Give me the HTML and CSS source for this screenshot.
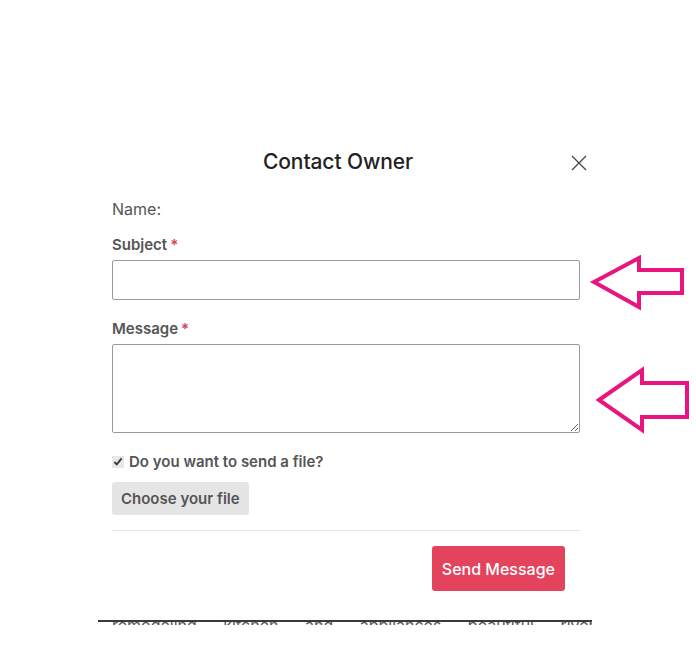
FILE: index.html
```html
<!DOCTYPE html>
<html lang="en">
<head>
    <meta charset="UTF-8">
    <meta name="viewport" content="width=device-width, initial-scale=1.0">
    <title>Contact Owner</title>
    <link rel="stylesheet" href="styles.css">
</head>
<body>
    <div class="modal">
        <div class="modal-header">
            <h2 class="modal-title">Contact Owner</h2>
            <button class="close-btn" aria-label="Close">
                <svg width="16" height="16" viewBox="0 0 16 16"><path d="M1 1L15 15M15 1L1 15" stroke="#444" stroke-width="1.3" fill="none"/></svg>
            </button>
        </div>
        <form class="modal-body">
            <div class="owner-name">Name:</div>
            <label class="field-label" for="subject">Subject<span class="req">*</span></label>
            <input type="text" id="subject" class="field-input">
            <label class="field-label message-label" for="message">Message<span class="req">*</span></label>
            <textarea id="message" class="field-textarea"></textarea>
            <label class="check-row"><input type="checkbox" checked> Do you want to send a file?</label>
            <button type="button" class="file-btn">Choose your file</button>
            <div class="modal-footer">
                <button type="button" class="send-btn">Send Message</button>
            </div>
        </form>
        <div class="page-edge"><span>remodeling kitchen and appliances beautiful river and</span></div>
    </div>

    <!-- annotation arrows -->
    <svg class="arrow arrow-one" width="100" height="60" viewBox="0 0 100 60">
        <polygon points="4,27 49,3 49,15 92,15 92,38 49,38 49,52" fill="none" stroke="#e8157f" stroke-width="4" stroke-linejoin="miter"/>
    </svg>
    <svg class="arrow arrow-two" width="100" height="70" viewBox="0 0 100 70">
        <polygon points="4,35 47,5 47,18 92,18 92,52 47,52 47,65" fill="none" stroke="#e8157f" stroke-width="4" stroke-linejoin="miter"/>
    </svg>
</body>
</html>
```

FILE: styles.css
```css
body {
    margin: 0;
    background-color: #fff;
    font-family: Inter, "Noto Sans", sans-serif;
    color: #555;
}
.modal {
    width: 494px;
    margin: 130px 0 0 98px;
    background-color: #fff;
}
.modal-header {
    display: flex;
    justify-content: center;
    align-items: center;
    padding: 20px 14px 0 0;
    position: relative;
}
.modal-title {
    margin: 0;
    font-size: 21px;
    line-height: 24px;
    font-weight: 500;
    color: #222;
    letter-spacing: -0.1px;
}
.close-btn {
    position: absolute;
    right: 5px;
    top: 25px;
    padding: 0;
    border: none;
    background: transparent;
    cursor: pointer;
    display: flex;
}
.modal-body {
    padding: 0 12px 0 14px;
    display: flex;
    flex-direction: column;
    align-items: flex-start;
}
.owner-name {
    margin-top: 25px;
    font-size: 16px;
    line-height: 20px;
    color: #555;
}
.field-label {
    margin-top: 16px;
    font-size: 15px;
    line-height: 20px;
    font-weight: 600;
    color: #555;
}
.message-label {
    margin-top: 19px;
}
.req {
    color: #d0445e;
    margin-left: 3px;
}
.field-input {
    box-sizing: border-box;
    width: 100%;
    height: 40px;
    margin-top: 5px;
    border: 1px solid #9a9a9a;
    border-radius: 2px;
}
.field-textarea {
    box-sizing: border-box;
    width: 100%;
    height: 89px;
    margin-top: 5px;
    border: 1px solid #9a9a9a;
    border-radius: 2px;
}
.check-row {
    margin-top: 19px;
    display: flex;
    align-items: center;
    gap: 5px;
    font-size: 15px;
    line-height: 20px;
    font-weight: 600;
    color: #555;
}
.check-row input {
    margin: 0;
    width: 12px;
    height: 12px;
    accent-color: #e8e8e8;
}
.file-btn {
    margin-top: 10px;
    height: 33px;
    padding: 0 9px;
    border: none;
    border-radius: 3px;
    background-color: #e5e5e5;
    font-family: inherit;
    font-size: 15px;
    font-weight: 600;
    color: #555;
}
.modal-footer {
    align-self: stretch;
    margin-top: 15px;
    border-top: 1px solid #e5e5e5;
    display: flex;
    justify-content: flex-end;
    padding: 15px 15px 0 0;
}
.send-btn {
    height: 45px;
    padding: 0 10px;
    border: none;
    border-radius: 3px;
    background-color: #e4435e;
    color: #fff;
    font-family: inherit;
    font-size: 16px;
    font-weight: 500;
}
.page-edge {
    margin-top: 29px;
    height: 3px;
    overflow: hidden;
    border-top: 2px solid #3a3a3a;
}
.page-edge span {
    display: block;
    margin-top: -7px;
    padding-left: 14px;
    font-size: 16px;
    word-spacing: 22px;
    color: #555;
    white-space: nowrap;
}
.arrow {
    position: absolute;
}
.arrow-one {
    left: 590px;
    top: 255px;
}
.arrow-two {
    left: 595px;
    top: 365px;
}
```
